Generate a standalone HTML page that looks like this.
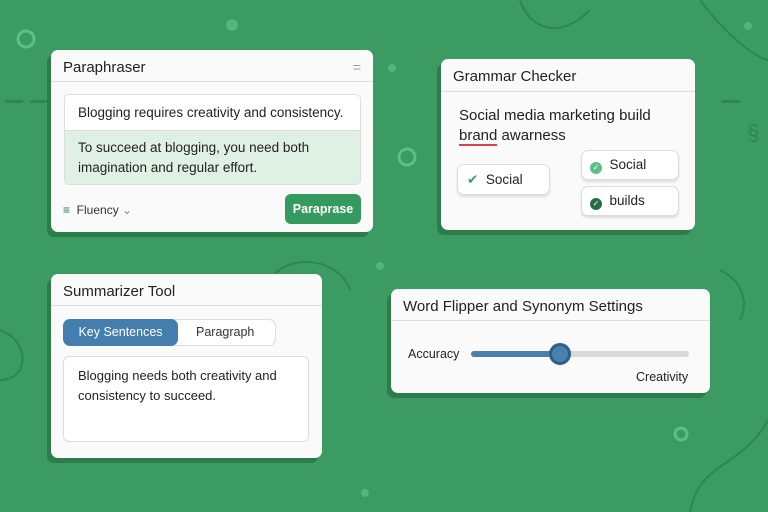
<!DOCTYPE html>
<html><head><style>
*{margin:0;padding:0;box-sizing:border-box}
body{width:768px;height:512px;overflow:hidden;background:#3b9b62;font-family:"Liberation Sans",sans-serif;color:#222;position:relative}
.card{position:absolute;background:#fafafa;border-radius:7px;box-shadow:-4px 5px 0 #2b7d4a}
.hd{height:32px;border-bottom:1px solid #ddd;font-size:15px;padding:9px 12px 0;color:#222}
.abs{position:absolute}
.dot{display:inline-block;width:12px;height:12px;border-radius:50%;vertical-align:-1px;color:#fff;font-size:8px;line-height:12px;text-align:center}
</style></head><body>
<svg class="abs" style="left:0;top:0" width="768" height="512">
<g fill="none" stroke="#2f8553" stroke-width="2">
<path d="M520 0 C530 30 560 40 590 10"/>
<path d="M700 0 C730 40 760 60 768 60"/>
<path d="M690 512 C700 460 740 470 768 420"/>
<path d="M0 330 C30 340 30 380 0 380"/>
<path d="M720 270 C740 280 750 300 740 320"/>
<path d="M270 280 C290 250 340 260 350 290"/>
</g>
<g fill="#56b37b">
<circle cx="232" cy="25" r="6"/><circle cx="748" cy="26" r="4"/><circle cx="392" cy="68" r="4"/><circle cx="380" cy="266" r="4"/><circle cx="365" cy="493" r="4"/>
</g>
<g fill="none" stroke="#5cbf85" stroke-width="3"><circle cx="26" cy="39" r="8"/><circle cx="407" cy="157" r="8"/><circle cx="681" cy="434" r="6"/></g>
<g fill="#2f8553"><rect x="5" y="100" width="18" height="3"/><rect x="30" y="100" width="20" height="3"/><rect x="722" y="100" width="18" height="3"/></g>
<text x="747" y="140" font-size="22" fill="#2f8553" font-family="Liberation Sans">§</text>
</svg>

<div class="card" style="left:51px;top:50px;width:322px;height:182px">
<div class="hd" style="font-size:15px;padding-top:9px">Paraphraser<span style="float:right;color:#999;font-size:14px">=</span></div>
<div class="abs" style="left:13px;top:44px;width:297px;height:91px;border:1px solid #ddd;border-radius:5px;overflow:hidden">
<div style="height:36px;background:#fff;border-bottom:1px solid #ddd;font-size:13.5px;padding:10px 0 0 13px">Blogging requires creativity and consistency.</div>
<div style="height:54px;background:#dff1e4;font-size:13.5px;line-height:20px;padding:7px 13px">To succeed at blogging, you need both imagination and regular effort.</div>
</div>
<div class="abs" style="left:12px;top:153px;font-size:12px;color:#333"><span style="color:#2a7d4a">&#8801;</span>&nbsp; Fluency <span style="color:#888">&#8964;</span></div>
<div class="abs" style="left:234px;top:144px;width:76px;height:30px;background:#349a5e;border-radius:6px;color:#fff;font-size:12.5px;font-weight:bold;text-align:center;line-height:30px">Paraprase</div>
</div>

<div class="card" style="left:441px;top:59px;width:254px;height:171px">
<div class="hd" style="height:33px">Grammar Checker</div>
<div class="abs" style="left:18px;top:47px;font-size:15px;line-height:20px">Social media marketing build<br><span style="border-bottom:2px solid #d9424f">brand</span> awarness</div>
<div class="abs" style="left:16px;top:105px;width:93px;height:31px;border:1px solid #ddd;border-radius:7px;background:#fff;font-size:13.5px;line-height:29px;padding-left:9px;box-shadow:0 2px 2px #ddd"><span style="color:#38a35f">&#10004;</span>&nbsp; Social</div>
<div class="abs" style="left:140px;top:91px;width:98px;height:30px;border:1px solid #ddd;border-radius:7px;background:#fff;font-size:13.5px;line-height:28px;padding-left:8px;box-shadow:0 2px 2px #ddd"><span class="dot" style="background:#5cbf85">&#10003;</span>&nbsp; Social</div>
<div class="abs" style="left:140px;top:127px;width:98px;height:30px;border:1px solid #ddd;border-radius:7px;background:#fff;font-size:13.5px;line-height:28px;padding-left:8px;box-shadow:0 2px 2px #ddd"><span class="dot" style="background:#276e44">&#10003;</span>&nbsp; builds</div>
</div>

<div class="card" style="left:51px;top:274px;width:271px;height:184px">
<div class="hd">Summarizer Tool</div>
<div class="abs" style="left:12px;top:45px;width:213px;height:27px;border:1px solid #ddd;border-radius:7px;background:#fff;font-size:12.5px">
<div class="abs" style="left:-1px;top:-1px;width:115px;height:27px;background:#437eaf;border-radius:7px;color:#fff;text-align:center;line-height:27px">Key Sentences</div>
<div class="abs" style="left:132px;top:0;line-height:25px;color:#333">Paragraph</div></div>
<div class="abs" style="left:12px;top:82px;width:246px;height:86px;border:1px solid #ddd;border-radius:6px;background:#fff;font-size:13px;line-height:20px;padding:9px 14px">Blogging needs both creativity and consistency to succeed.</div>
</div>

<div class="card" style="left:391px;top:289px;width:319px;height:104px">
<div class="hd">Word Flipper and Synonym Settings</div>
<div class="abs" style="left:17px;top:58px;font-size:12.5px">Accuracy</div>
<div class="abs" style="left:80px;top:62px;width:218px;height:6px;border-radius:3px;background:#d9d9d9"></div>
<div class="abs" style="left:80px;top:62px;width:90px;height:6px;border-radius:3px;background:#4a80b0"></div>
<div class="abs" style="left:158px;top:54px;width:22px;height:22px;border-radius:50%;background:#4a80b0;border:3px solid #2e5f8a"></div>
<div class="abs" style="left:245px;top:81px;font-size:12.5px">Creativity</div>
</div>
</body></html>
